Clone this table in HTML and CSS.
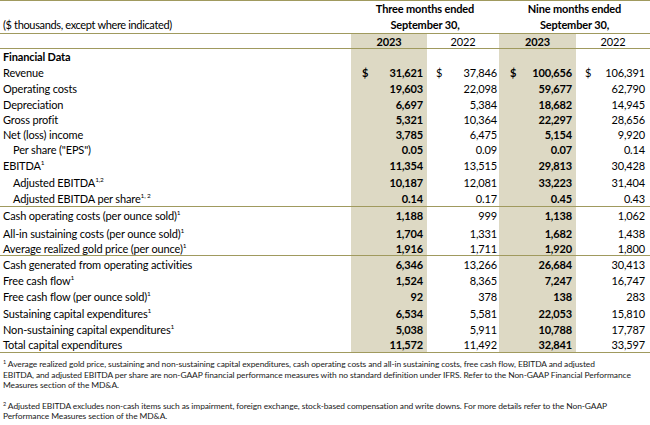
FILE: index.html
```html
<!DOCTYPE html>
<html>
<head>
<meta charset="utf-8">
<link rel="stylesheet" href="styles.css">
</head>
<body>
<table class="fin">
  <colgroup>
    <col class="c-label"><col class="c1"><col class="c2"><col class="c3"><col class="c4">
  </colgroup>
  <thead>
    <tr class="head1">
      <th class="label unit">($ thousands, except where indicated)</th>
      <th colspan="2" class="period">Three months ended<br>September 30,</th>
      <th colspan="2" class="period">Nine months ended<br>September 30,</th>
    </tr>
    <tr class="head2">
      <th class="label"></th>
      <th class="yr cur shade">2023</th>
      <th class="yr prev">2022</th>
      <th class="yr cur shade">2023</th>
      <th class="yr prev">2022</th>
    </tr>
  </thead>
  <tbody>
    <tr class="r16"><td class="label sec">Financial Data</td><td class="shade"></td><td></td><td class="shade"></td><td></td></tr>
    <tr class="r16"><td class="label">Revenue</td>
      <td class="shade cur"><div class="v"><span>$</span><span>31,621</span></div></td>
      <td class="prev"><div class="v"><span>$</span><span>37,846</span></div></td>
      <td class="shade cur"><div class="v"><span>$</span><span>100,656</span></div></td>
      <td class="prev p4"><div class="v"><span>$</span><span>106,391</span></div></td></tr>
    <tr class="r16"><td class="label">Operating costs</td><td class="shade cur num">19,603</td><td class="prev num">22,098</td><td class="shade cur num">59,677</td><td class="prev num p4">62,790</td></tr>
    <tr class="r15"><td class="label">Depreciation</td><td class="shade cur num">6,697</td><td class="prev num">5,384</td><td class="shade cur num">18,682</td><td class="prev num p4">14,945</td></tr>
    <tr class="r15"><td class="label">Gross profit</td><td class="shade cur num">5,321</td><td class="prev num">10,364</td><td class="shade cur num">22,297</td><td class="prev num p4">28,656</td></tr>
    <tr class="r15"><td class="label">Net (loss) income</td><td class="shade cur num">3,785</td><td class="prev num">6,475</td><td class="shade cur num">5,154</td><td class="prev num p4">9,920</td></tr>
    <tr class="r15"><td class="label ind">Per share ("EPS")</td><td class="shade cur num">0.05</td><td class="prev num">0.09</td><td class="shade cur num">0.07</td><td class="prev num p4">0.14</td></tr>
    <tr class="r17"><td class="label">EBITDA<sup>1</sup></td><td class="shade cur num">11,354</td><td class="prev num">13,515</td><td class="shade cur num">29,813</td><td class="prev num p4">30,428</td></tr>
    <tr class="r17"><td class="label ind">Adjusted EBITDA<sup>1,2</sup></td><td class="shade cur num">10,187</td><td class="prev num">12,081</td><td class="shade cur num">33,223</td><td class="prev num p4">31,404</td></tr>
    <tr class="r16 sep"><td class="label ind">Adjusted EBITDA per share<sup>1, 2</sup></td><td class="shade cur num">0.14</td><td class="prev num">0.17</td><td class="shade cur num">0.45</td><td class="prev num p4">0.43</td></tr>
    <tr class="r18"><td class="label">Cash operating costs (per ounce sold)<sup>1</sup></td><td class="shade cur num">1,188</td><td class="prev num">999</td><td class="shade cur num">1,138</td><td class="prev num p4">1,062</td></tr>
    <tr class="r17"><td class="label">All-in sustaining costs (per ounce sold)<sup>1</sup></td><td class="shade cur num">1,704</td><td class="prev num">1,331</td><td class="shade cur num">1,682</td><td class="prev num p4">1,438</td></tr>
    <tr class="r14 sep"><td class="label">Average realized gold price (per ounce)<sup>1</sup></td><td class="shade cur num">1,916</td><td class="prev num">1,711</td><td class="shade cur num">1,920</td><td class="prev num p4">1,800</td></tr>
    <tr class="r17"><td class="label">Cash generated from operating activities</td><td class="shade cur num">6,346</td><td class="prev num">13,266</td><td class="shade cur num">26,684</td><td class="prev num p4">30,413</td></tr>
    <tr class="r16"><td class="label">Free cash flow<sup>1</sup></td><td class="shade cur num">1,524</td><td class="prev num">8,365</td><td class="shade cur num">7,247</td><td class="prev num p4">16,747</td></tr>
    <tr class="r16"><td class="label">Free cash flow (per ounce sold)<sup>1</sup></td><td class="shade cur num">92</td><td class="prev num">378</td><td class="shade cur num">138</td><td class="prev num p4">283</td></tr>
    <tr class="r17"><td class="label">Sustaining capital expenditures<sup>1</sup></td><td class="shade cur num">6,534</td><td class="prev num">5,581</td><td class="shade cur num">22,053</td><td class="prev num p4">15,810</td></tr>
    <tr class="r16"><td class="label">Non-sustaining capital expenditures<sup>1</sup></td><td class="shade cur num">5,038</td><td class="prev num">5,911</td><td class="shade cur num">10,788</td><td class="prev num p4">17,787</td></tr>
    <tr class="r15 sep"><td class="label">Total capital expenditures</td><td class="shade cur num">11,572</td><td class="prev num">11,492</td><td class="shade cur num">32,841</td><td class="prev num p4">33,597</td></tr>
  </tbody>
</table>
<div class="notes">
  <p><sup>1</sup> Average realized gold price, sustaining and non-sustaining capital expenditures, cash operating costs and all-in sustaining costs, free cash flow, EBITDA and adjusted<br>EBITDA, and adjusted EBITDA per share are non-GAAP financial performance measures with no standard definition under IFRS. Refer to the Non-GAAP Financial Performance<br>Measures section of the MD&amp;A.</p>
  <p><sup>2</sup> Adjusted EBITDA excludes non-cash items such as impairment, foreign exchange, stock-based compensation and write downs. For more details refer to the Non-GAAP<br>Performance Measures section of the MD&amp;A.</p>
</div>
</body>
</html>
```
FILE: styles.css
```css
html, body {
  margin: 0;
  padding: 0;
  background: #ffffff;
}
body {
  width: 650px;
  height: 425px;
  overflow: hidden;
  font-family: Lato, "Liberation Sans", sans-serif;
  color: #000;
}
.fin {
  width: 650px;
  border-collapse: collapse;
  table-layout: fixed;
  font-size: 11px;
  letter-spacing: -0.15px;
  border-top: 1px solid #a09a5e;
}
.c-label { width: 351px; }
.c1 { width: 76px; }
.c2 { width: 72px; }
.c3 { width: 77px; }
.c4 { width: 74px; }
.fin th, .fin td {
  padding: 0;
  font-weight: normal;
  white-space: nowrap;
}
.head1 { height: 31px; border-bottom: 1px solid #a09a5e; }
.head1 th { vertical-align: bottom; }
.unit { text-align: left; padding-left: 3px !important; padding-bottom: 2px !important; letter-spacing: -0.35px; }
.period {
  font-weight: bold !important;
  text-align: center;
  line-height: 16px;
  vertical-align: top !important;
}
.head2 { height: 15px; border-bottom: 1px solid #a09a5e; }
.yr { text-align: center; }
.yr.cur { font-weight: bold; }
.shade { background: #ddd9c4; }
.label { text-align: left; padding-left: 3px !important; }
.label.ind { padding-left: 13px !important; }
.label.sec { font-weight: bold; }
.cur { font-weight: bold !important; }
.num { text-align: right; padding-right: 4px !important; }
.prev.num { padding-right: 2px !important; }
.prev.num.p4 { padding-right: 5px !important; }
.v { display: flex; justify-content: space-between; padding: 0 4px 0 11px; }
.prev .v { padding: 0 2px 0 9px; }
.prev.p4 .v { padding: 0 5px 0 9px; }
.r14 { height: 14px; }
.r15 { height: 15px; }
.r16 { height: 16px; }
.r17 { height: 17px; }
.r18 { height: 18px; }
.sep { border-bottom: 1px solid #a09a5e; }
sup {
  font-size: 6.5px;
  vertical-align: 5px;
  line-height: 0;
  font-weight: normal;
}
.notes {
  padding: 6px 3px 0 3px;
  font-size: 8.45px;
  letter-spacing: -0.1px;
  line-height: 10.5px;
  color: #1a1a1a;
}
.notes p { margin: 0 0 10px 0; white-space: nowrap; }
.notes sup { font-size: 5.5px; vertical-align: 3px; }
```
